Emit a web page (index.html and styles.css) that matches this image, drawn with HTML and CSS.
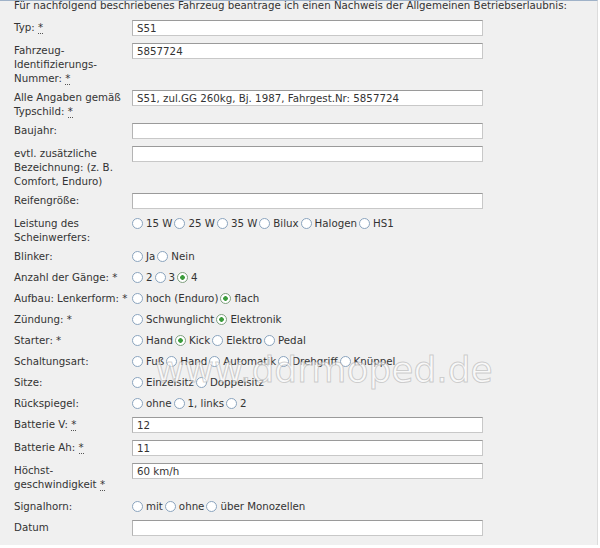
FILE: index.html
```html
<!DOCTYPE html>
<html lang="de">
<head>
  <meta charset="UTF-8">
  <title>Nachweis der Allgemeinen Betriebserlaubnis</title>
  <link rel="stylesheet" href="styles.css">
</head>
<body class="abe-body">

<div class="abe-page">
  <p class="abe-intro">Für nachfolgend beschriebenes Fahrzeug beantrage ich einen Nachweis der Allgemeinen Betriebserlaubnis:</p>

  <form class="abe-form">
    <div class="abe-row">
      <label class="abe-label">Typ: <abbr class="abe-req" title="Pflichtfeld">*</abbr></label>
      <input class="abe-input" type="text" value="S51">
    </div>

    <div class="abe-row">
      <label class="abe-label">Fahrzeug-<br>Identifizierungs-<br>Nummer: <abbr class="abe-req" title="Pflichtfeld">*</abbr></label>
      <input class="abe-input" type="text" value="5857724">
    </div>

    <div class="abe-row">
      <label class="abe-label">Alle Angaben gemäß<br>Typschild: <abbr class="abe-req" title="Pflichtfeld">*</abbr></label>
      <input class="abe-input" type="text" value="S51, zul.GG 260kg, Bj. 1987, Fahrgest.Nr: 5857724">
    </div>

    <div class="abe-row">
      <label class="abe-label">Baujahr:</label>
      <input class="abe-input" type="text" value="">
    </div>

    <div class="abe-row">
      <label class="abe-label">evtl. zusätzliche<br>Bezeichnung: (z. B.<br>Comfort, Enduro)</label>
      <input class="abe-input" type="text" value="">
    </div>

    <div class="abe-row">
      <label class="abe-label">Reifengröße:</label>
      <input class="abe-input" type="text" value="">
    </div>

    <div class="abe-row abe-row-radio">
      <span class="abe-label">Leistung des<br>Scheinwerfers:</span>
      <div class="abe-options">
        <label class="abe-option"><input class="abe-radio" type="radio" name="leistung">15 W</label>
        <label class="abe-option"><input class="abe-radio" type="radio" name="leistung">25 W</label>
        <label class="abe-option"><input class="abe-radio" type="radio" name="leistung">35 W</label>
        <label class="abe-option"><input class="abe-radio" type="radio" name="leistung">Bilux</label>
        <label class="abe-option"><input class="abe-radio" type="radio" name="leistung">Halogen</label>
        <label class="abe-option"><input class="abe-radio" type="radio" name="leistung">HS1</label>
      </div>
    </div>

    <div class="abe-row abe-row-radio">
      <span class="abe-label">Blinker:</span>
      <div class="abe-options">
        <label class="abe-option"><input class="abe-radio" type="radio" name="blinker">Ja</label>
        <label class="abe-option"><input class="abe-radio" type="radio" name="blinker">Nein</label>
      </div>
    </div>

    <div class="abe-row abe-row-radio">
      <span class="abe-label">Anzahl der Gänge: *</span>
      <div class="abe-options">
        <label class="abe-option"><input class="abe-radio" type="radio" name="gaenge">2</label>
        <label class="abe-option"><input class="abe-radio" type="radio" name="gaenge">3</label>
        <label class="abe-option"><input class="abe-radio" type="radio" name="gaenge" checked>4</label>
      </div>
    </div>

    <div class="abe-row abe-row-radio">
      <span class="abe-label">Aufbau: Lenkerform: *</span>
      <div class="abe-options">
        <label class="abe-option"><input class="abe-radio" type="radio" name="lenker">hoch (Enduro)</label>
        <label class="abe-option"><input class="abe-radio" type="radio" name="lenker" checked>flach</label>
      </div>
    </div>

    <div class="abe-row abe-row-radio">
      <span class="abe-label">Zündung: *</span>
      <div class="abe-options">
        <label class="abe-option"><input class="abe-radio" type="radio" name="zuendung">Schwunglicht</label>
        <label class="abe-option"><input class="abe-radio" type="radio" name="zuendung" checked>Elektronik</label>
      </div>
    </div>

    <div class="abe-row abe-row-radio">
      <span class="abe-label">Starter: *</span>
      <div class="abe-options">
        <label class="abe-option"><input class="abe-radio" type="radio" name="starter">Hand</label>
        <label class="abe-option"><input class="abe-radio" type="radio" name="starter" checked>Kick</label>
        <label class="abe-option"><input class="abe-radio" type="radio" name="starter">Elektro</label>
        <label class="abe-option"><input class="abe-radio" type="radio" name="starter">Pedal</label>
      </div>
    </div>

    <div class="abe-row abe-row-radio">
      <span class="abe-label">Schaltungsart:</span>
      <div class="abe-options">
        <label class="abe-option"><input class="abe-radio" type="radio" name="schaltung">Fuß</label>
        <label class="abe-option"><input class="abe-radio" type="radio" name="schaltung">Hand</label>
        <label class="abe-option"><input class="abe-radio" type="radio" name="schaltung">Automatik</label>
        <label class="abe-option"><input class="abe-radio" type="radio" name="schaltung">Drehgriff</label>
        <label class="abe-option"><input class="abe-radio" type="radio" name="schaltung">Knüppel</label>
      </div>
    </div>

    <div class="abe-row abe-row-radio">
      <span class="abe-label">Sitze:</span>
      <div class="abe-options">
        <label class="abe-option"><input class="abe-radio" type="radio" name="sitze">Einzelsitz</label>
        <label class="abe-option"><input class="abe-radio" type="radio" name="sitze">Doppelsitz</label>
      </div>
    </div>

    <div class="abe-row abe-row-radio">
      <span class="abe-label">Rückspiegel:</span>
      <div class="abe-options">
        <label class="abe-option"><input class="abe-radio" type="radio" name="spiegel">ohne</label>
        <label class="abe-option"><input class="abe-radio" type="radio" name="spiegel">1, links</label>
        <label class="abe-option"><input class="abe-radio" type="radio" name="spiegel">2</label>
      </div>
    </div>

    <div class="abe-row">
      <label class="abe-label">Batterie V: <abbr class="abe-req" title="Pflichtfeld">*</abbr></label>
      <input class="abe-input" type="text" value="12">
    </div>

    <div class="abe-row">
      <label class="abe-label">Batterie Ah: <abbr class="abe-req" title="Pflichtfeld">*</abbr></label>
      <input class="abe-input" type="text" value="11">
    </div>

    <div class="abe-row abe-row-tall">
      <label class="abe-label">Höchst-<br>geschwindigkeit <abbr class="abe-req" title="Pflichtfeld">*</abbr></label>
      <input class="abe-input" type="text" value="60 km/h">
    </div>

    <div class="abe-row abe-row-radio">
      <span class="abe-label">Signalhorn:</span>
      <div class="abe-options">
        <label class="abe-option"><input class="abe-radio" type="radio" name="horn">mit</label>
        <label class="abe-option"><input class="abe-radio" type="radio" name="horn">ohne</label>
        <label class="abe-option"><input class="abe-radio" type="radio" name="horn">über Monozellen</label>
      </div>
    </div>

    <div class="abe-row">
      <label class="abe-label">Datum</label>
      <input class="abe-input" type="text" value="">
    </div>
  </form>

  <div class="abe-watermark">www.ddrmoped.de</div>
</div>

</body>
</html>
```

FILE: styles.css
```css
/* base */
.abe-body {
  margin: 0;
  padding: 0;
  background: #fff;
  font-family: "DejaVu Sans", Verdana, sans-serif;
  font-size: 10.25px;
  color: #333;
}

.abe-page {
  position: relative;
  width: 583px;
  height: 544px;
  padding-left: 14px;
  background: #f0f0f0;
  border-top: 1px solid #9fb2c8;
  border-right: 1px solid #dcdcdc;
  overflow: hidden;
}

.abe-intro {
  margin: -3px 0 6px;
  line-height: 14px;
  white-space: nowrap;
}

/* rows */
.abe-row {
  display: grid;
  grid-template-columns: 118px 351px;
  align-items: start;
  padding: 2px 0 3px;
}

.abe-row-radio {
  min-height: 16px;
}

.abe-row-tall {
  padding-bottom: 6px;
}

.abe-label {
  line-height: 14px;
  white-space: nowrap;
}

.abe-req {
  text-decoration: none;
  border-bottom: 1px dotted #555;
  cursor: help;
}

.abe-input {
  box-sizing: border-box;
  width: 351px;
  height: 16px;
  margin: 0 0 2px;
  padding: 0 4px;
  border: 1px solid #c8c8c8;
  border-top-color: #9a9a9a;
  border-left-color: #b4b4b4;
  background: #fff;
  font-family: "DejaVu Sans", Verdana, sans-serif;
  font-size: 10.25px;
  color: #333;
}

/* radios */
.abe-options {
  display: flex;
  gap: 2px;
  line-height: 14px;
  white-space: nowrap;
}

.abe-option {
  display: inline-flex;
  align-items: center;
}

.abe-radio {
  appearance: none;
  -webkit-appearance: none;
  box-sizing: border-box;
  width: 11px;
  height: 11px;
  margin: 0 3px 0 0;
  border: 1px solid #8aa4be;
  border-radius: 50%;
  background: #fff;
}

.abe-radio:checked {
  border-color: #7fa07f;
  background: radial-gradient(circle, #3c9c3c 0, #3c9c3c 2px, #fff 2.6px);
}

/* watermark */
.abe-watermark {
  position: absolute;
  left: 155px;
  top: 351px;
  font-family: "DejaVu Sans", sans-serif;
  font-size: 36px;
  line-height: 36px;
  color: rgba(255, 255, 255, .6);
  -webkit-text-stroke: 1px rgba(140, 140, 140, .4);
  pointer-events: none;
}
```
